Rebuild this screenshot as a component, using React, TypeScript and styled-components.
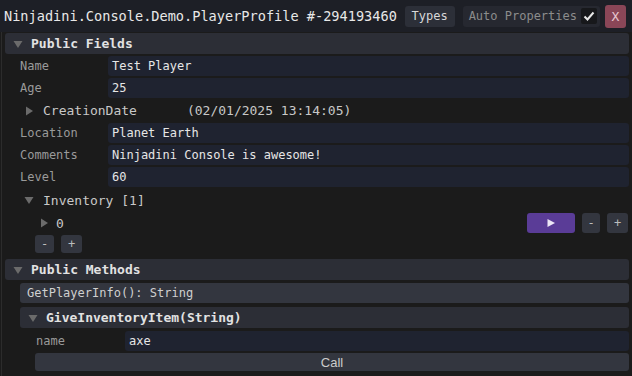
import React from "react";
import styled, { createGlobalStyle } from "styled-components";

const GlobalStyle = createGlobalStyle`
  html, body {
    margin: 0;
    padding: 0;
    background: #1b1b1b;
  }
  * { box-sizing: border-box; }
`;

const mono = `"DejaVu Sans Mono", "Liberation Mono", monospace`;

const Window = styled.div`
  width: 632px;
  height: 376px;
  overflow: hidden;
  background: #1b1b1b;
  font-family: ${mono};
  color: #dcdcdc;
  display: flex;
  flex-direction: column;
`;

const TitleBar = styled.div`
  height: 32px;
  flex: none;
  display: flex;
  align-items: center;
  padding: 0 6px 0 4px;
  background: #1d1f26;
`;

const Title = styled.div`
  flex: 1;
  min-width: 0;
  overflow: hidden;
  font-size: 13.6px;
  color: #e8e8e8;
  white-space: nowrap;
`;

const ToolButton = styled.div`
  flex: none;
  height: 21px;
  padding: 0 7px;
  display: flex;
  align-items: center;
  border-radius: 3px;
  background: #2c2f38;
  color: #d8d8d8;
  font-size: 12px;
  white-space: nowrap;
`;

const Toggle = styled(ToolButton)`
  color: #8c8c8c;
  gap: 4px;
  margin-left: 8px;
  padding: 0 3px 0 6px;
  background: #262830;
`;

const Check = styled.div`
  width: 16px;
  height: 16px;
  border-radius: 2px;
  background: #17181b;
  display: flex;
  align-items: center;
  justify-content: center;
`;

const CloseButton = styled.div`
  flex: none;
  width: 21px;
  height: 23px;
  margin-left: 5px;
  border-radius: 3px;
  background: #8a4657;
  color: #e8c9d0;
  font-size: 13px;
  display: flex;
  align-items: center;
  justify-content: center;
`;

const Body = styled.div`
  flex: 1;
  border-left: 1px solid #2c2c2c;
  margin-left: 1px;
  display: flex;
  flex-direction: column;
  padding: 0 3px 0 2px;
`;

const SectionHeader = styled.div<{ $indent?: number; $top?: number }>`
  flex: none;
  height: 21px;
  margin: ${(p) => p.$top ?? 1}px 0 0 ${(p) => p.$indent ?? 1}px;
  display: flex;
  align-items: center;
  gap: 8px;
  padding-left: 8px;
  border-radius: 3px;
  background: #2c2e36;
  font-size: 13px;
  font-weight: bold;
  color: #e2e2e2;
`;

const FieldRow = styled.div<{ $indent?: number; $top?: number }>`
  flex: none;
  height: 22px;
  margin-top: ${(p) => p.$top ?? 0}px;
  display: flex;
  align-items: center;
  padding-left: ${(p) => p.$indent ?? 16}px;
`;

const Label = styled.div<{ $width?: number }>`
  width: ${(p) => p.$width ?? 88}px;
  flex: none;
  font-size: 12px;
  color: #9a9a9a;
`;

const Input = styled.div`
  flex: 1;
  height: 20px;
  border-radius: 3px;
  background: #1f2330;
  display: flex;
  align-items: center;
  padding-left: 4px;
  font-size: 12px;
  color: #e6e6e6;
`;

const FoldRow = styled.div<{ $indent: number; $height?: number }>`
  flex: none;
  height: ${(p) => p.$height ?? 24}px;
  display: flex;
  align-items: center;
  gap: 9px;
  padding-left: ${(p) => p.$indent}px;
  font-size: 13px;
  color: #c8c8c8;
`;

const FoldValue = styled.span`
  margin-left: 41px;
`;

const Spacer = styled.div`
  flex: 1;
`;

const SmallButton = styled.div<{ $width?: number; $height?: number; $accent?: boolean }>`
  width: ${(p) => p.$width ?? 20}px;
  height: ${(p) => p.$height ?? 20}px;
  border-radius: 3px;
  background: ${(p) => (p.$accent ? "#5a3c97" : "#33363f")};
  color: ${(p) => (p.$accent ? "#ece6f6" : "#bdbdbd")};
  font-size: 12px;
  display: flex;
  align-items: center;
  justify-content: center;
`;

const ButtonGroup = styled.div<{ $indent?: number; $right?: number }>`
  flex: none;
  display: flex;
  gap: 7px;
  align-items: center;
  height: 20px;
  padding-left: ${(p) => p.$indent ?? 0}px;
  margin-right: ${(p) => p.$right ?? 0}px;
`;

const ItemRow = styled.div`
  flex: none;
  height: 22px;
  display: flex;
  align-items: center;
  padding-left: 35px;
`;

const ItemIndex = styled.span`
  margin-left: 7px;
  font-size: 13px;
  color: #c8c8c8;
`;

const MethodButton = styled.div<{ $indent: number; $top?: number; $center?: boolean }>`
  flex: none;
  height: 20px;
  margin: ${(p) => p.$top ?? 3}px 0 0 ${(p) => p.$indent}px;
  border-radius: 3px;
  background: #33363f;
  display: flex;
  align-items: center;
  justify-content: ${(p) => (p.$center ? "center" : "flex-start")};
  padding-left: ${(p) => (p.$center ? 0 : 7)}px;
  font-size: 12px;
  color: #cfcfcf;
`;

const CallButton = styled(MethodButton)`
  height: 18px;
  font-family: "Liberation Sans", Arial, sans-serif;
  font-size: 13px;
  color: #cccccc;
`;

const Arrow = ({ open }: { open: boolean }) => (
  <svg width="10" height="10" viewBox="0 0 10 10" style={{ flex: "none" }}>
    {open ? (
      <path d="M0.5 2 L9.5 2 L5 9 Z" fill="#6b6b6b" />
    ) : (
      <path d="M2 0.5 L9 5 L2 9.5 Z" fill="#6b6b6b" />
    )}
  </svg>
);

const CheckMark = () => (
  <svg width="12" height="12" viewBox="0 0 12 12">
    <path d="M1.5 6.5 L4.5 9.5 L10.5 2.5" stroke="#e8e8e8" strokeWidth="2" fill="none" />
  </svg>
);

const PlayIcon = () => (
  <svg width="10" height="10" viewBox="0 0 10 10">
    <path d="M1.5 1 L9 5 L1.5 9 Z" fill="#ece6f6" />
  </svg>
);

const fields1 = [
  { name: "Name", value: "Test Player" },
  { name: "Age", value: "25" },
];

const fields2 = [
  { name: "Location", value: "Planet Earth" },
  { name: "Comments", value: "Ninjadini Console is awesome!" },
  { name: "Level", value: "60" },
];

export default function App() {
  return (
    <>
      <GlobalStyle />
      <Window>
        <TitleBar>
          <Title>Ninjadini.Console.Demo.PlayerProfile #-294193460</Title>
          <ToolButton>Types</ToolButton>
          <Toggle>
            Auto Properties
            <Check>
              <CheckMark />
            </Check>
          </Toggle>
          <CloseButton>X</CloseButton>
        </TitleBar>
        <Body>
          <SectionHeader>
            <Arrow open />
            Public Fields
          </SectionHeader>
          {fields1.map((f, i) => (
            <FieldRow key={f.name} $top={i === 0 ? 1 : 0}>
              <Label>{f.name}</Label>
              <Input>{f.value}</Input>
            </FieldRow>
          ))}
          <FoldRow $indent={20} $height={23}>
            <Arrow open={false} />
            CreationDate
            <FoldValue>(02/01/2025 13:14:05)</FoldValue>
          </FoldRow>
          {fields2.map((f) => (
            <FieldRow key={f.name}>
              <Label>{f.name}</Label>
              <Input>{f.value}</Input>
            </FieldRow>
          ))}
          <FoldRow $indent={20}>
            <Arrow open />
            Inventory [1]
          </FoldRow>
          <ItemRow>
            <Arrow open={false} />
            <ItemIndex>0</ItemIndex>
            <Spacer />
            <ButtonGroup $right={1}>
              <SmallButton $accent $width={48}>
                <PlayIcon />
              </SmallButton>
              <SmallButton $width={18}>-</SmallButton>
              <SmallButton $width={21}>+</SmallButton>
            </ButtonGroup>
          </ItemRow>
          <ButtonGroup $indent={31}>
            <SmallButton $width={19} $height={18}>-</SmallButton>
            <SmallButton $width={21} $height={18}>+</SmallButton>
          </ButtonGroup>
          <SectionHeader $top={5}>
            <Arrow open />
            Public Methods
          </SectionHeader>
          <MethodButton $indent={16}>GetPlayerInfo(): String</MethodButton>
          <SectionHeader $indent={16} $top={4}>
            <Arrow open />
            GiveInventoryItem(String)
          </SectionHeader>
          <FieldRow $indent={32} $top={2}>
            <Label $width={89}>name</Label>
            <Input>axe</Input>
          </FieldRow>
          <CallButton $indent={31} $top={1} $center>
            Call
          </CallButton>
        </Body>
      </Window>
    </>
  );
}
